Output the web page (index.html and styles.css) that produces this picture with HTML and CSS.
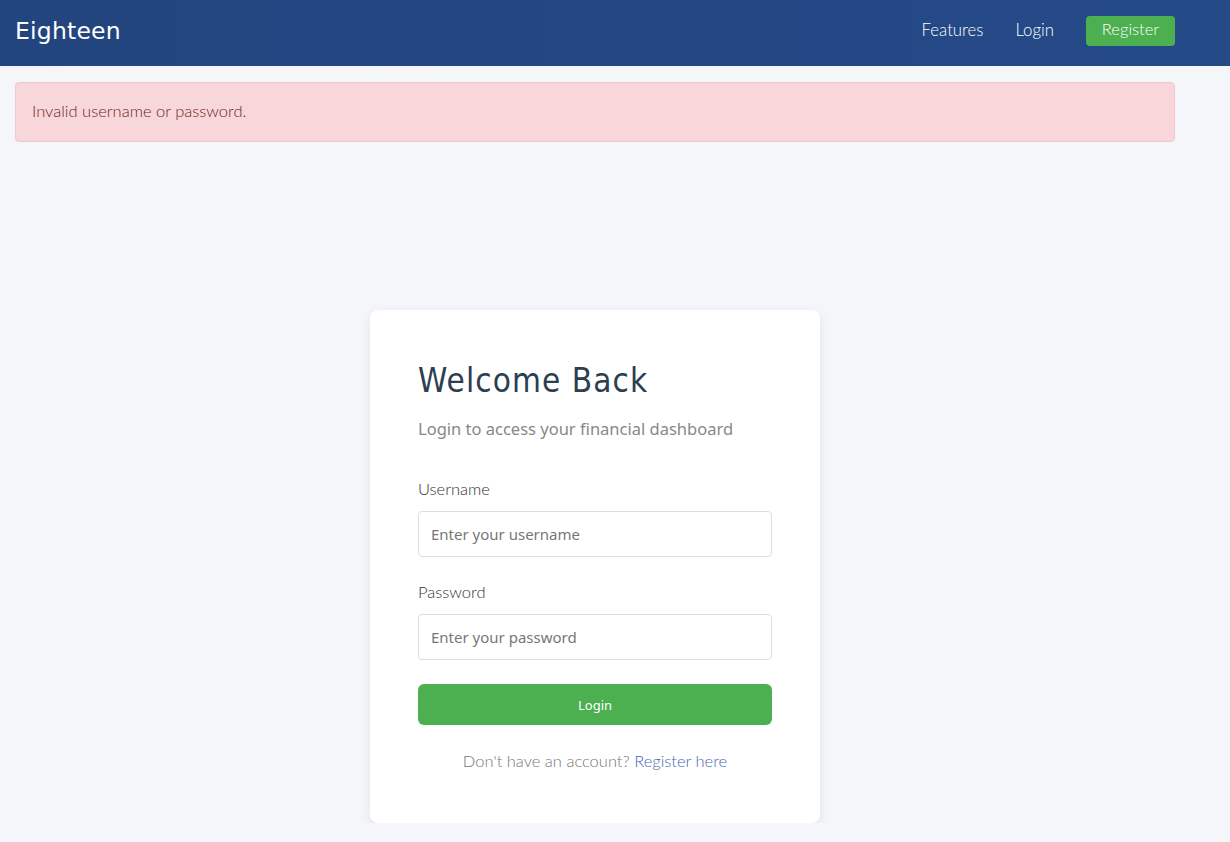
FILE: index.html
```html
<!DOCTYPE html>
<html lang="en">
<head>
<meta charset="utf-8">
<title>Eighteen - Login</title>
<link rel="stylesheet" href="styles.css">
</head>
<body>
<header class="navbar">
  <div class="brand">Eighteen</div>
  <nav class="nav-links">
    <a class="nav-link" href="#">Features</a>
    <a class="nav-link" href="#">Login</a>
    <a class="nav-btn" href="#">Register</a>
  </nav>
</header>
<main class="container">
  <div class="alert">Invalid username or password.</div>
  <section class="auth">
    <div class="card">
      <h1 class="title">Welcome Back</h1>
      <p class="subtitle">Login to access your financial dashboard</p>
      <form class="form">
        <label class="label" for="u">Username</label>
        <input class="input" id="u" type="text" placeholder="Enter your username">
        <label class="label" for="p">Password</label>
        <input class="input" id="p" type="password" placeholder="Enter your password">
        <button class="submit" type="button">Login</button>
      </form>
      <p class="foot">Don't have an account? <a href="#" class="link">Register here</a></p>
    </div>
  </section>
</main>
</body>
</html>
```
FILE: styles.css
```css
* { box-sizing: border-box; }
html, body { margin: 0; padding: 0; }
body {
  background: #f4f6f9;
  font-family: "Lato", "Liberation Sans", sans-serif;
  font-weight: 300;
  color: #333;
}
.navbar {
  height: 66px;
  background: linear-gradient(90deg, #22457f, #254a88);
  display: flex;
  align-items: center;
  justify-content: space-between;
  padding: 0 55px 0 15px;
}
.brand {
  font-family: "DejaVu Sans", sans-serif;
  font-weight: 400;
  font-size: 23.5px;
  color: #ffffff;
  letter-spacing: 0.2px;
  margin-top: -5px;
}
.nav-links {
  display: flex;
  align-items: center;
  margin-top: -5px;
}
.nav-link {
  color: #ffffff;
  text-decoration: none;
  font-size: 16.8px;
  margin-right: 32px;
  margin-top: -3px;
}
.nav-btn {
  color: #ffffff;
  text-decoration: none;
  font-size: 16.5px;
  background: #4caf50;
  border-radius: 4px;
  width: 89px;
  height: 30px;
  display: flex;
  align-items: center;
  justify-content: center;
  padding-bottom: 3px;
}
.container {
  padding: 16px 55px 0 15px;
}
.alert {
  background: #f8d7da;
  border: 1px solid #f5c6cb;
  border-radius: 4px;
  color: #721c24;
  font-size: 16.5px;
  height: 60px;
  padding: 0 16px 3px;
  display: flex;
  align-items: center;
}
.auth {
  display: flex;
  justify-content: center;
  padding-top: 168px;
}
.card {
  width: 450px;
  background: #ffffff;
  border-radius: 8px;
  box-shadow: 0 4px 12px rgba(0, 0, 0, 0.08);
  padding: 48px 48px 47px;
}
.title {
  margin: 4px 0 0;
  font-family: "DejaVu Sans", sans-serif;
  font-stretch: condensed;
  font-weight: 400;
  font-size: 33px;
  letter-spacing: 1.1px;
  color: #2c3e50;
  line-height: 38px;
}
.subtitle {
  margin: 17px 0 0;
  font-family: "Noto Sans", sans-serif;
  font-weight: 400;
  font-size: 16.5px;
  color: #888888;
}
.form {
  display: flex;
  flex-direction: column;
  margin-top: 37px;
}
.label {
  font-size: 16.5px;
  color: #333;
  margin-bottom: 10px;
  line-height: 24px;
}
.input {
  height: 46px;
  border: 1px solid #dddddd;
  border-radius: 4px;
  padding: 0 12px;
  font-family: "Noto Sans", sans-serif;
  font-size: 15px;
  color: #333;
  margin-bottom: 23px;
  background: #fff;
}
.input::placeholder { color: #777; }
.submit {
  height: 41px;
  border: none;
  border-radius: 6px;
  background: #4caf50;
  color: #ffffff;
  font-family: "Noto Sans", sans-serif;
  font-size: 13px;
  margin-top: 1px;
}
.foot {
  margin: 26px 0 5px;
  text-align: center;
  font-size: 16.5px;
  color: #777;
}
.link {
  color: #4a68b0;
  text-decoration: none;
}
```
